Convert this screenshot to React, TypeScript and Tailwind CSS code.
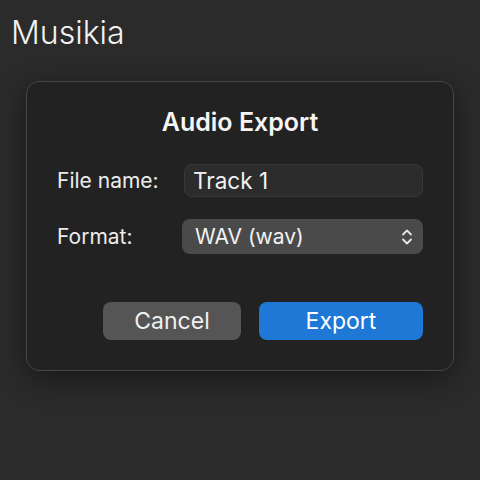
export default function App() {
  return (
    <div
      className="w-[480px] h-[480px] bg-[#2b2b2b] text-white overflow-hidden"
      style={{ fontFamily: "Inter, 'Noto Sans', sans-serif" }}
    >
      <div className="pl-[11px] pt-[12px] text-[32px] leading-[42px] font-light text-[#f2f2f2]">
        Musikia
      </div>

      <div className="ml-[26px] mt-[27px] w-[428px] h-[290px] rounded-[13px] border border-[#454545] bg-[#222222] shadow-[0_8px_30px_rgba(0,0,0,0.45)] px-[30px] pt-[26px]">
        <h1 className="text-center text-[25px] leading-[28px] font-semibold text-[#f5f5f5]">
          Audio Export
        </h1>

        <div className="mt-[28px] flex items-center">
          <label className="w-[127px] text-[21px] text-[#ececec]">File name:</label>
          <div className="flex-1 h-[33px] rounded-[8px] bg-[#2c2c2c] border border-[#383838] flex items-center pl-[8px] text-[22.5px] text-[#f2f2f2]">
            Track 1
          </div>
        </div>

        <div className="mt-[22px] flex items-center">
          <label className="w-[125px] text-[21px] text-[#ececec]">Format:</label>
          <div className="flex-1 h-[35px] rounded-[8px] bg-[#4a4a4a] flex items-center justify-between pl-[13px] pr-[10px] text-[21px] text-[#f2f2f2]">
            <span>WAV (wav)</span>
            <svg width="12" height="20" viewBox="0 0 12 20" fill="none" stroke="#e6e6e6" strokeWidth="1.8" strokeLinecap="round" strokeLinejoin="round">
              <path d="M2 7.5 L6 3.5 L10 7.5" />
              <path d="M2 12.5 L6 16.5 L10 12.5" />
            </svg>
          </div>
        </div>

        <div className="mt-[48px] flex justify-end gap-[18px]">
          <button className="w-[138px] h-[38px] rounded-[8px] bg-[#555555] text-[23px] text-[#f0f0f0]">
            Cancel
          </button>
          <button className="w-[164px] h-[38px] rounded-[8px] bg-[#1f78d6] text-[23px] text-white">
            Export
          </button>
        </div>
      </div>
    </div>
  );
}
